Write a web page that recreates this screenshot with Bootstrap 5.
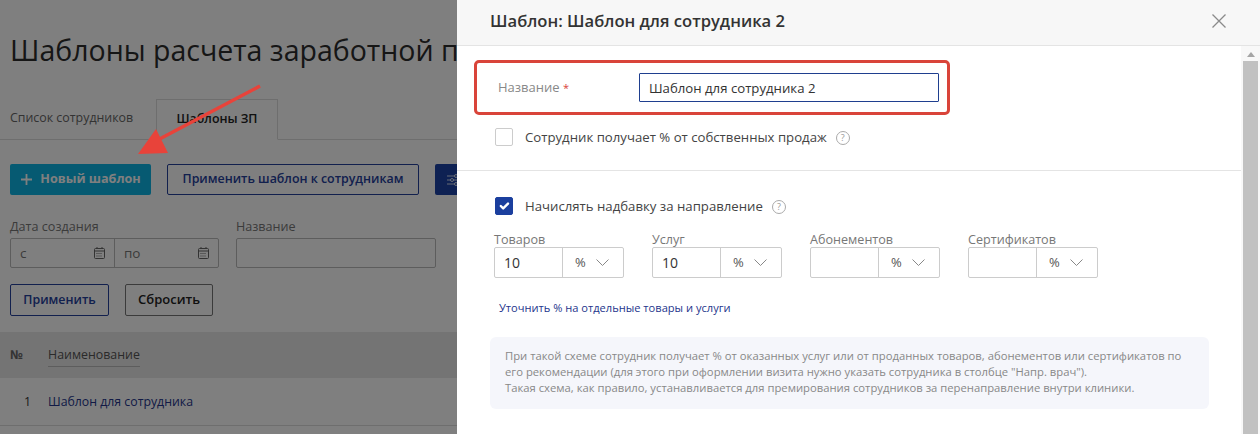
<!DOCTYPE html>
<html lang="ru">
<head>
<meta charset="utf-8">
<title>Шаблоны расчета заработной платы</title>
<link href="https://cdn.jsdelivr.net/npm/bootstrap@5.3.0/dist/css/bootstrap.min.css" rel="stylesheet">
<style>
html,body{height:434px;overflow:hidden;background:#fff}
body{font-family:"Open Sans","Liberation Sans",sans-serif;font-size:13px;color:#333;position:relative;width:1260px}
.pg{height:434px;overflow:hidden;width:457px;padding-top:32px}
.pg-title{font-size:28.5px;line-height:36px;font-weight:500;white-space:nowrap;margin:0 0 31px 10px;color:#2d2d2d}
.pg-tabs{height:41px;padding-left:0;border-bottom:1px solid #ddd;flex-wrap:nowrap}
.pg-tabs .nav-link{font-size:12.4px;color:#666;padding:0;height:40px;line-height:38px;border-radius:0;margin:0}
.pg-tabs .t1{width:156px;padding-left:10px;border:0}
.pg-tabs .t2{width:122px;text-align:center;color:#222;font-weight:600;border:1px solid #ddd;border-bottom:1px solid #fff;height:41px}
.act-row{margin-top:24px;padding-left:10px;gap:16px;flex-wrap:nowrap}
.b{height:31px;font-size:12.4px;font-weight:600;border-radius:2px;padding:0;display:flex;align-items:center;justify-content:center;white-space:nowrap;flex:none}
.b-teal{width:141px;background:#0cb4e4;color:#fff;border:0;gap:7px;font-weight:700;font-size:12.6px}
.b-navy{width:252px;border:1px solid #24409c;color:#24409c;background:#fff}
.b-blue{width:60px;background:#1c42a6;border:0;justify-content:flex-start;padding-left:12px}
.flt{margin:24px 0 0 10px;gap:17px}
.lb{font-size:12.6px;line-height:16px;color:#777;margin-bottom:3px}
.g-date{width:209px;height:30px;border:1px solid #bbb;border-radius:2px;display:flex}
.g-date>div{flex:1;display:flex;align-items:center;justify-content:space-between;padding:0 9px;color:#777;font-size:13.5px}
.g-date>div+div{border-left:1px solid #bbb}
.g-name{width:200px;height:30px;border:1px solid #bbb;border-radius:2px;background:#fff}
.app-row{margin:16px 0 0 10px;gap:16px}
.b-apply{width:99px;height:32px;border:1px solid #24409c;color:#24409c;background:#fff}
.b-reset{width:88px;height:32px;border:1px solid #777;color:#222;background:#fff;font-size:13px}
.tb-h{margin-top:16px;height:46px;background:#e8e8e8;color:#666;font-weight:700;display:flex;align-items:center;font-size:12.4px}
.tb-n{width:48px;padding-left:10px;flex:none}
.tb-h u{text-decoration:none;border-bottom:1px solid #bbb;padding-bottom:3px;font-weight:500;color:#555}
.tb-r{height:48px;display:flex;align-items:center;border-bottom:1px solid #ddd;color:#24358c;font-size:12.3px;padding-top:1px}
.tb-r .tb-n{color:#333;text-align:right;padding:0 17px 0 0}
.dim{position:absolute;left:0;top:0;width:457px;height:434px;background:rgba(0,0,0,.5)}
.arrow{position:absolute;left:0;top:0;width:457px;height:434px;pointer-events:none}
.panel{position:absolute;left:457px;top:0;width:803px;height:434px;background:#fff;overflow:hidden}
.p-head{height:46px;background:#f7f7f7;border-bottom:1px solid #e4e4e4;display:flex;align-items:center;justify-content:space-between;padding:0 34px 3px 33px}
.p-title{font-size:16.6px;font-weight:600;color:#333;margin:0;line-height:20px}
.p-close{border:0;background:none;padding:0;width:14px;height:14px;display:block}
.p-body{display:flex;height:388px}
.p-main{width:784px;flex:none}
.sbar{flex:1;background:#f8f8f8}
.sb-up{width:0;height:0;border:4px solid transparent;border-bottom:5px solid #a5a5a5;border-top:0;margin:6px auto 0}
.sb-th{background:#c1c1c1;height:380px;margin:4px 2px 0 2px}
.name-row{margin:27px 0 0 41px;display:flex;align-items:center;height:29px}
.name-lb{width:141px;color:#888;font-size:13px;padding-top:1px}
.name-lb span{color:#d9433a;font-size:11px}
.name-in{width:300px;height:29px;border:1px solid #1f3f8f;border-radius:1px;font-size:13.2px;color:#333;padding:0 9px;box-shadow:none}
.ck{margin:26px 0 0 38px;height:18px;display:flex;align-items:center;font-size:13.2px;color:#444;padding:0}
.ck .form-check-input{width:18px;height:18px;border-radius:2px;border:1px solid #ccc;margin:0 12px 0 0;float:none;flex:none}
.ck .form-check-input:checked{background-color:#1b3f9e;border-color:#1b3f9e}
.ck-t{padding-top:2px}
.hq{width:14px;height:14px;border:1px solid #aaa;border-radius:50%;font-size:9px;line-height:12px;text-align:center;color:#999;margin:1px 0 0 9px;flex:none}
.sep{border:0;border-top:1px solid #e4e4e4;opacity:1;margin:24px 0 26px}
.pct-row{margin:17px 0 0 37px;gap:28px}
.pct{width:130px}
.pct .lb{margin:0;color:#777;line-height:15px;font-size:12.6px;height:15px;white-space:nowrap}
.pct-g{display:flex;height:31px;border:1px solid #ccc;border-radius:2px}
.pct-g .v{width:68px;border-right:1px solid #ccc;padding:0 9px;font-size:14px;line-height:29px;color:#333}
.pct-g .u{flex:1;display:flex;align-items:center;justify-content:space-between;padding:0 14px 0 12px;color:#555;font-size:13px}
.lnk{display:block;margin:22px 0 0 42px;font-size:11.1px;line-height:16px;color:#24358c;text-decoration:none;font-weight:500}
.info{margin:21px 0 0 33px;width:719px;height:72px;background:#f5f6fb;border-radius:6px;padding:11px 15px;font-size:11.27px;line-height:16px;color:#888}
.mark-box{position:absolute;left:474px;top:60px;width:476px;height:55px;border:3px solid #d9443a;border-radius:5px;pointer-events:none}
</style>
</head>
<body>
<div class="pg">
  <h1 class="pg-title">Шаблоны расчета заработной платы</h1>
  <ul class="nav nav-tabs pg-tabs">
    <li class="nav-item"><a class="nav-link t1" href="#">Список сотрудников</a></li>
    <li class="nav-item"><a class="nav-link t2" href="#">Шаблоны ЗП</a></li>
  </ul>
  <div class="d-flex act-row">
    <button class="btn b b-teal"><svg width="13" height="13" viewBox="0 0 13 13"><path d="M6.5 1v11M1 6.500h11" stroke="#fff" stroke-width="1.800" fill="none"/></svg>Новый шаблон</button>
    <button class="btn b b-navy">Применить шаблон к сотрудникам</button>
    <button class="btn b b-blue" aria-label="Настройки"><svg width="14" height="14" viewBox="0 0 14 14" fill="none" stroke="#fff" stroke-width=".8"><path d="M0 3h14M0 7h14M0 11h14"/><circle cx="9" cy="3" r="1.500" fill="#1c42a6"/><circle cx="5" cy="7" r="1.500" fill="#1c42a6"/><circle cx="9" cy="11" r="1.500" fill="#1c42a6"/></svg></button>
  </div>
  <div class="d-flex flt">
    <div><div class="lb">Дата создания</div>
      <div class="g-date">
        <div>с<svg width="11" height="12" viewBox="0 0 11 12" fill="none" stroke="#666"><rect x=".5" y="1.500" width="10" height="10" rx="1"/><path d="M0 4h11M3 0v2M8 0v2"/><path d="M2.500 6.500h6M2.500 9h6" stroke-dasharray="1 1"/></svg></div>
        <div>по<svg width="11" height="12" viewBox="0 0 11 12" fill="none" stroke="#666"><rect x=".5" y="1.500" width="10" height="10" rx="1"/><path d="M0 4h11M3 0v2M8 0v2"/><path d="M2.500 6.500h6M2.500 9h6" stroke-dasharray="1 1"/></svg></div>
      </div></div>
    <div><div class="lb">Название</div><div class="g-name"></div></div>
  </div>
  <div class="d-flex app-row">
    <button class="btn b b-apply">Применить</button>
    <button class="btn b b-reset">Сбросить</button>
  </div>
  <div class="tb-h"><div class="tb-n">№</div><div><u>Наименование</u></div></div>
  <div class="tb-r"><div class="tb-n">1</div><div>Шаблон для сотрудника</div></div>
</div>
<div class="dim"></div>
<svg class="arrow" viewBox="0 0 457 434"><path d="M260 86 152 143" stroke="#e8433a" stroke-width="3.500" fill="none"/><path d="M138 154 156 129 168 153Z" fill="#e8433a"/></svg>

<div class="panel">
  <div class="p-head">
    <h5 class="p-title">Шаблон: Шаблон для сотрудника 2</h5>
    <button class="p-close" aria-label="Закрыть"><svg width="14" height="14" viewBox="0 0 14 14" style="display:block"><path d="M.5.500l13 13M13.500.500l-13 13" stroke="#8a8a8a" stroke-width="1.300" fill="none"/></svg></button>
  </div>
  <div class="p-body">
    <div class="p-main">
      <div class="name-row">
        <div class="name-lb">Название <span>*</span></div>
        <input class="form-control name-in" value="Шаблон для сотрудника 2">
      </div>
      <div class="ck"><input class="form-check-input" type="checkbox"><span class="ck-t">Сотрудник получает % от собственных продаж</span><span class="hq">?</span></div>
      <hr class="sep">
      <div class="ck mt-0"><input class="form-check-input" type="checkbox" checked><span class="ck-t">Начислять надбавку за направление</span><span class="hq">?</span></div>
      <div class="d-flex pct-row">
        <div class="pct"><div class="lb">Товаров</div><div class="pct-g"><div class="v">10</div><div class="u">%<svg width="13" height="7" viewBox="0 0 13 7"><path d="M.5.500l6 6 6-6" stroke="#888" fill="none"/></svg></div></div></div>
        <div class="pct"><div class="lb">Услуг</div><div class="pct-g"><div class="v">10</div><div class="u">%<svg width="13" height="7" viewBox="0 0 13 7"><path d="M.5.500l6 6 6-6" stroke="#888" fill="none"/></svg></div></div></div>
        <div class="pct"><div class="lb">Абонементов</div><div class="pct-g"><div class="v"></div><div class="u">%<svg width="13" height="7" viewBox="0 0 13 7"><path d="M.5.500l6 6 6-6" stroke="#888" fill="none"/></svg></div></div></div>
        <div class="pct"><div class="lb">Сертификатов</div><div class="pct-g"><div class="v"></div><div class="u">%<svg width="13" height="7" viewBox="0 0 13 7"><path d="M.5.500l6 6 6-6" stroke="#888" fill="none"/></svg></div></div></div>
      </div>
      <a class="lnk" href="#">Уточнить % на отдельные товары и услуги</a>
      <div class="info">При такой схеме сотрудник получает % от оказанных услуг или от проданных товаров, абонементов или сертификатов по<br>его рекомендации (для этого при оформлении визита нужно указать сотрудника в столбце "Напр. врач").<br>Такая схема, как правило, устанавливается для премирования сотрудников за перенаправление внутри клиники.</div>
    </div>
    <div class="sbar"><div class="sb-up"></div><div class="sb-th"></div></div>
  </div>
</div>
<div class="mark-box"></div>
</body>
</html>
